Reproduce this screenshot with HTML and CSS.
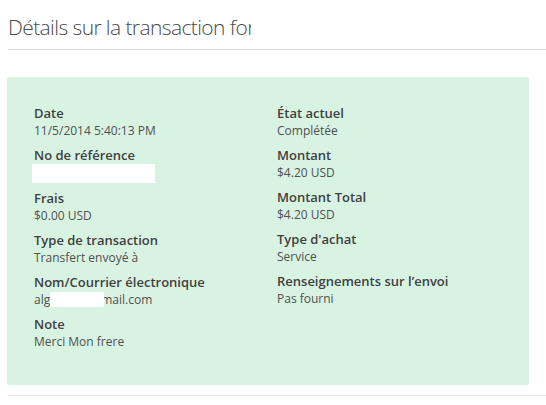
FILE: index.html
```html
<!DOCTYPE html>
<html lang="fr">
<head>
<meta charset="UTF-8">
<title>Détails sur la transaction</title>
<link rel="stylesheet" href="styles.css">
</head>
<body>
    <div class="header">
        <h1 class="title">Détails sur la transaction for</h1>
    </div>
    <div class="details">
        <div class="col">
            <div class="item">
                <div class="label">Date</div>
                <div class="value">11/5/2014 5:40:13 PM</div>
            </div>
            <div class="item">
                <div class="label">No de référence</div>
                <div class="value"><span class="hide ref"></span></div>
            </div>
            <div class="item">
                <div class="label">Frais</div>
                <div class="value">$0.00 USD</div>
            </div>
            <div class="item">
                <div class="label">Type de transaction</div>
                <div class="value">Transfert envoyé à</div>
            </div>
            <div class="item">
                <div class="label">Nom/Courrier électronique</div>
                <div class="value">alg<span class="hide mail"></span>mail.com</div>
            </div>
            <div class="item">
                <div class="label">Note</div>
                <div class="value">Merci Mon frere</div>
            </div>
        </div>
        <div class="col">
            <div class="item">
                <div class="label">État actuel</div>
                <div class="value">Complétée</div>
            </div>
            <div class="item">
                <div class="label">Montant</div>
                <div class="value">$4.20 USD</div>
            </div>
            <div class="item">
                <div class="label">Montant Total</div>
                <div class="value">$4.20 USD</div>
            </div>
            <div class="item">
                <div class="label">Type d'achat</div>
                <div class="value">Service</div>
            </div>
            <div class="item">
                <div class="label">Renseignements sur l’envoi</div>
                <div class="value">Pas fourni</div>
            </div>
        </div>
    </div>
    <div class="footer"></div>
</body>
</html>
```

FILE: styles.css
```css
* {
    margin: 0;
    padding: 0;
}
body {
    font-family: "Open Sans", "Liberation Sans", sans-serif;
    background: #fff;
    overflow: hidden;
}
.header {
    margin-left: 8px;
    padding-top: 12px;
    padding-bottom: 7px;
    border-bottom: 1px solid #dcdcdc;
}
.title {
    width: 243px;
    overflow: hidden;
    white-space: nowrap;
    font-size: 21px;
    font-weight: 300;
    letter-spacing: -0.6px;
    line-height: 30px;
    color: #4a4a4a;
}
.details {
    display: flex;
    margin: 27px 0 0 7px;
    width: 522px;
    padding: 27px 0 34px 27px;
    box-sizing: border-box;
    background: #d9f3e3;
    border-radius: 3px;
}
.col {
    width: 243px;
}
.item {
    margin-bottom: 6px;
}
.item:last-child {
    margin-bottom: 0;
}
.label {
    font-size: 13px;
    font-weight: 600;
    line-height: 18px;
    color: #404040;
}
.value {
    font-size: 12px;
    line-height: 18px;
    color: #505050;
}
.hide {
    display: inline-block;
    background: #fff;
    vertical-align: top;
}
.ref {
    width: 123px;
    height: 19px;
    margin-left: -2px;
}
.mail {
    position: relative;
    z-index: 1;
    width: 54px;
    height: 15px;
    margin-top: 1px;
    margin-right: -3px;
}
.footer {
    margin: 10px 0 0 8px;
    border-top: 1px solid #e6e6e6;
}
```
